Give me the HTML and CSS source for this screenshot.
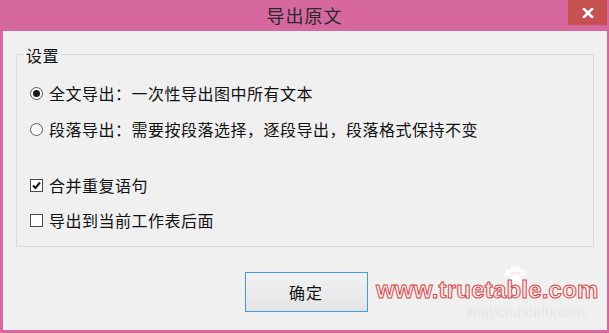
FILE: index.html
```html
<!DOCTYPE html>
<html lang="zh-CN">
<head>
    <meta charset="UTF-8">
    <title>导出原文</title>
    <link rel="stylesheet" href="styles.css">
</head>
<body>
    <div class="window">
        <div class="titlebar">
            <span></span>
            <div class="title">导出原文</div>
            <div class="close">
                <svg width="12" height="10" viewBox="0 0 12 10">
                    <path d="M2 1 L10 9 M10 1 L2 9" stroke="#fff" stroke-width="2.6" stroke-linecap="square"/>
                </svg>
            </div>
        </div>

        <div class="content">
            <div class="group">
                <div class="group-title">设置</div>
                <label class="option first">
                    <span class="radio checked"></span>
                    <span>全文导出：一次性导出图中所有文本</span>
                </label>
                <label class="option">
                    <span class="radio"></span>
                    <span>段落导出：需要按段落选择，逐段导出，段落格式保持不变</span>
                </label>
                <label class="option spaced">
                    <span class="checkbox">
                        <svg width="11" height="11" viewBox="0 0 11 11">
                            <path d="M2 5.5 L4.5 8 L9 2.5" fill="none" stroke="#111" stroke-width="2"/>
                        </svg>
                    </span>
                    <span>合并重复语句</span>
                </label>
                <label class="option tight">
                    <span class="checkbox"></span>
                    <span>导出到当前工作表后面</span>
                </label>
            </div>

            <div class="actions">
                <button class="ok">确定</button>
            </div>
        </div>

        <!-- watermarks over the dialog -->
        <div class="baidu-logo">
            <svg width="24" height="20" viewBox="0 0 24 20">
                <g fill="rgba(255,255,255,0.85)">
                    <ellipse cx="5" cy="7" rx="3" ry="3.5"/>
                    <ellipse cx="10" cy="3" rx="3" ry="3"/>
                    <ellipse cx="15" cy="3" rx="3" ry="3"/>
                    <ellipse cx="20" cy="7" rx="3" ry="3.5"/>
                    <path d="M12.5 8 C9 8 6 13 6 16 C6 19 9 19 12.5 18 C16 19 19 19 19 16 C19 13 16 8 12.5 8 Z"/>
                </g>
            </svg>
        </div>
        <div class="watermark">www.truetable.com</div>
        <div class="baidu-url">jingyan.baidu.com</div>
    </div>
</body>
</html>
```

FILE: styles.css
```css
body {
    margin: 0;
    padding: 0;
    background-color: #d6679f;
    font-family: "Noto Sans CJK SC", "Microsoft YaHei", sans-serif;
}
.window {
    position: relative;
    width: 609px;
    height: 333px;
    display: flex;
    flex-direction: column;
    background-color: #d6679f;
    overflow: hidden;
}
.titlebar {
    height: 31px;
    display: grid;
    grid-template-columns: 41px 1fr 41px;
    align-items: start;
}
.title {
    text-align: center;
    font-size: 18px;
    line-height: 30px;
    color: #2a2a2a;
    letter-spacing: 1px;
}
.close {
    width: 39px;
    height: 25px;
    background-color: #c75050;
    display: flex;
    align-items: center;
    justify-content: center;
}
.content {
    flex: 1;
    margin: 0 2px 3px 3px;
    background-color: #f0f0f0;
    padding: 23px 13px 0;
    font-size: 16px;
    letter-spacing: 0.5px;
    color: #111;
}
.group {
    border: 1px solid #dcdcdc;
    height: 191px;
    padding-left: 13px;
}
.group-title {
    width: max-content;
    margin: -11px 0 0 -6px;
    padding: 0 2px;
    line-height: 22px;
    background-color: #f0f0f0;
}
.option {
    display: flex;
    align-items: center;
    gap: 6px;
    height: 24px;
    margin-top: 12px;
}
.option.first {
    margin-top: 15px;
}
.option.spaced {
    margin-top: 32px;
}
.option.tight {
    margin-top: 11px;
}
.radio {
    width: 11px;
    height: 11px;
    border: 1px solid #5a5a5a;
    border-radius: 50%;
    background: linear-gradient(#f4f4f4, #ffffff);
    display: flex;
    align-items: center;
    justify-content: center;
}
.radio.checked::after {
    content: "";
    width: 7px;
    height: 7px;
    border-radius: 50%;
    background-color: #1a1a1a;
}
.checkbox {
    width: 11px;
    height: 11px;
    border: 1px solid #4a4a4a;
    background-color: #fff;
    display: flex;
    align-items: center;
    justify-content: center;
}
.actions {
    display: flex;
    justify-content: center;
    margin-top: 25px;
}
.ok {
    width: 123px;
    height: 40px;
    border: 1px solid #3c9bf0;
    background: linear-gradient(#f2f2f2, #e4e4e4);
    font-family: "Noto Sans CJK SC", sans-serif;
    font-size: 16px;
    letter-spacing: 1px;
    color: #111;
    margin-left: 2px;
}
.baidu-logo {
    position: absolute;
    left: 503px;
    top: 266px;
}
.watermark {
    position: absolute;
    left: 376px;
    top: 276px;
    font-family: "Liberation Sans", Arial, sans-serif;
    font-weight: bold;
    font-size: 24px;
    letter-spacing: 0.2px;
    color: rgba(250, 232, 236, 0.9);
    -webkit-text-stroke: 1px #d24a4a;
}
.baidu-url {
    position: absolute;
    left: 467px;
    top: 304px;
    font-family: "Liberation Sans", Arial, sans-serif;
    font-size: 14px;
    line-height: 16px;
    letter-spacing: 0.4px;
    color: rgba(255, 255, 255, 0.9);
    text-shadow: 0 0 1px rgba(0, 0, 0, 0.25);
}
```
